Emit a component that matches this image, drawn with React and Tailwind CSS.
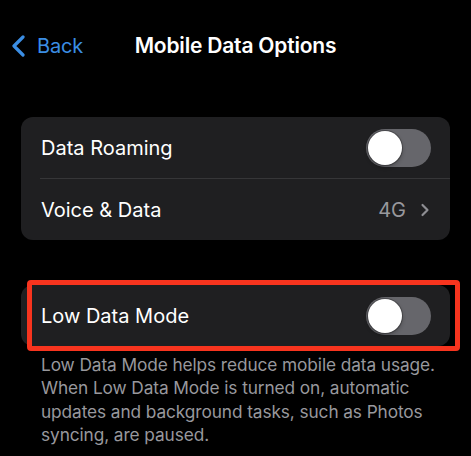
import { ChevronRight } from "lucide-react";

function Toggle() {
  return (
    <div className="w-[65px] h-[38px] rounded-full bg-[#66666b] p-[2px] flex items-center flex-shrink-0">
      <span className="block w-[34px] h-[34px] rounded-full bg-white shadow-[0_0_0_1px_rgba(0,0,0,0.25),0_2px_4px_rgba(0,0,0,0.3)]" />
    </div>
  );
}

function BackChevron() {
  return (
    <svg width="16" height="22" viewBox="0 0 16 22" fill="none" className="flex-shrink-0">
      <path d="M13 2 L4 11 L13 20" stroke="currentColor" strokeWidth="3.2" strokeLinecap="round" strokeLinejoin="round" />
    </svg>
  );
}

export default function App() {
  return (
    <div
      className="w-[471px] h-[456px] bg-black text-white overflow-hidden"
      style={{ fontFamily: "Inter, 'Noto Sans', sans-serif" }}
    >
      <header className="mt-[24px] h-[44px] grid grid-cols-[1fr_auto_1fr] items-center">
        <div className="flex items-center text-[#3b8ee4] pl-[10px]">
          <BackChevron />
          <span className="ml-[11px] text-[20px] tracking-[-0.2px]">Back</span>
        </div>
        <h1 className="text-[21px] font-semibold tracking-[-0.2px]">Mobile Data Options</h1>
        <div />
      </header>

      <section className="mt-[49px] mx-[21px] rounded-[12px] bg-[#1f1f21]">
        <div className="h-[61px] pl-[20px] pr-[19px] flex items-center justify-between">
          <span className="text-[20px]">Data Roaming</span>
          <Toggle />
        </div>
        <div className="ml-[19px] h-px bg-[#363638]" />
        <div className="h-[61px] pl-[20px] pr-[19px] flex items-center justify-between">
          <span className="text-[20px]">Voice &amp; Data</span>
          <div className="flex items-center gap-[9px] text-[#98989d]">
            <span className="text-[20px]">4G</span>
            <ChevronRight size={20} strokeWidth={2.6} className="text-[#8e8e93] -mr-[4px]" />
          </div>
        </div>
      </section>

      <section className="relative mt-[45px] mx-[21px] rounded-[12px] bg-[#1f1f21]">
        <div className="h-[61px] pl-[20px] pr-[19px] flex items-center justify-between">
          <span className="text-[20px]">Low Data Mode</span>
          <Toggle />
        </div>
        <div className="absolute top-[-5px] left-[6px] w-[433px] h-[71px] border-[5px] border-[#f7341e] rounded-[4px]" />
      </section>

      <p className="mt-[7px] pl-[41px] text-[17.3px] leading-[23.3px] text-[#98989d] tracking-[-0.1px]">
        <span className="block">Low Data Mode helps reduce mobile data usage.</span>
        <span className="block">When Low Data Mode is turned on, automatic</span>
        <span className="block">updates and background tasks, such as Photos</span>
        <span className="block">syncing, are paused.</span>
      </p>
    </div>
  );
}
